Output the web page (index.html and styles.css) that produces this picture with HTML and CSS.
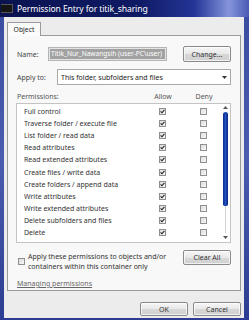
FILE: index.html
```html
<!DOCTYPE html>
<html>
<head>
    <title>Permission Entry for titik_sharing</title>
    <meta name="viewport" content="width=device-width, initial-scale=1.0">
    <link rel="stylesheet" href="styles.css">
</head>
<body>
    <div class="window">
        <div class="titlebar">
            <span class="app-icon"></span>
            <span class="title">Permission Entry for titik_sharing</span>
        </div>

        <div class="dialog">
            <div class="tabs">
                <div class="tab">Object</div>
            </div>

            <div class="panel">
                <div class="form-row">
                    <span class="label name-label">Name:</span>
                    <div class="textbox"><span class="selected">Titik_Nur_Nawangsih (user-PC\user)</span></div>
                    <button class="btn change-btn">Change...</button>
                </div>

                <div class="form-row apply-row">
                    <span class="label apply-label">Apply to:</span>
                    <div class="combo">
                        <span>This folder, subfolders and files</span>
                        <svg class="combo-arrow" width="5" height="3" viewBox="0 0 5 3"><path d="M0 0h5L2.5 3z" fill="#333"/></svg>
                    </div>
                </div>

                <div class="perm-head">
                    <span class="perm-title">Permissions:</span>
                    <span class="col">Allow</span>
                    <span class="col deny-col">Deny</span>
                </div>

                <div class="perm-list">
                    <div class="rows" id="rows">
                        <!-- rows inserted by script -->
                    </div>
                    <div class="scrollbar">
                        <svg class="arrow arrow-up" width="5" height="3" viewBox="0 0 5 3"><path d="M0 3h5L2.5 0z" fill="#555"/></svg>
                        <div class="track"><div class="thumb"></div></div>
                        <svg class="arrow" width="5" height="3" viewBox="0 0 5 3"><path d="M0 0h5L2.5 3z" fill="#555"/></svg>
                    </div>
                </div>

                <div class="apply-box">
                    <span class="chk"></span>
                    <span class="apply-text">Apply these permissions to objects and/or<br>containers within this container only</span>
                    <button class="btn clear-btn">Clear All</button>
                </div>

                <a href="#" class="manage-link">Managing permissions</a>
            </div>

            <div class="footer">
                <button class="btn ok-btn">OK</button>
                <button class="btn cancel-btn">Cancel</button>
            </div>
        </div>
    </div>

    <script>
        // Permission rows (last one is scrolled half out of view)
        const perms = [
            'Full control',
            'Traverse folder / execute file',
            'List folder / read data',
            'Read attributes',
            'Read extended attributes',
            'Create files / write data',
            'Create folders / append data',
            'Write attributes',
            'Write extended attributes',
            'Delete subfolders and files',
            'Delete',
            ''
        ];

        const check = '<svg width="5" height="5" viewBox="0 0 5 5"><path d="M0.6 2.4L2 3.8L4.4 0.9" fill="none" stroke="#222" stroke-width="1.1"/></svg>';

        const rows = document.getElementById('rows');
        perms.forEach(name => {
            const row = document.createElement('div');
            row.className = 'perm-row';
            row.innerHTML = `
                <span class="perm-name">${name}</span>
                <span class="cell"><span class="chk checked">${name ? check : ''}</span></span>
                <span class="cell deny-cell"><span class="chk"></span></span>
            `;
            rows.appendChild(row);
        });
    </script>
</body>
</html>
```

FILE: styles.css
```css
body {
    margin: 0;
    padding: 0;
    font-family: "Noto Sans", "Open Sans", sans-serif;
    font-size: 7px;
    color: #333;
    background-color: #2a3a8e;
}
.window {
    width: 249px;
    height: 320px;
    overflow: hidden;
    background: linear-gradient(to bottom, #3a4ca0, #4a5cb0 50%, #2c3c92);
}
.titlebar {
    height: 17px;
    display: flex;
    align-items: center;
    background: linear-gradient(to right, #0a1350 0%, #0f1a64 55%, #243496 78%, #8494dc 92%, #4a5ab4 100%);
}
.app-icon {
    width: 11px;
    height: 7px;
    margin-left: 1px;
    background-color: #151515;
    border: 1px solid #555;
    border-left: none;
}
.title {
    margin-left: 4px;
    color: #fff;
    font-size: 8.6px;
    letter-spacing: -0.1px;
}
.dialog {
    margin: 0 5px 0 4px;
    height: 301px;
    padding: 3px 3px 0 3px;
    box-sizing: border-box;
    background-color: #ececec;
}
.tabs {
    display: flex;
    height: 15px;
}
.tab {
    width: 34px;
    height: 14px;
    margin-top: 1px;
    border: 1px solid #9a9a9a;
    border-bottom: none;
    background-color: #fbfbfb;
    box-sizing: border-box;
    display: flex;
    align-items: center;
    justify-content: center;
    font-size: 6.8px;
    color: #222;
    position: relative;
    top: 1px;
}
.panel {
    height: 256px;
    border: 1px solid #9a9a9a;
    background-color: #f8f8f8;
    box-sizing: border-box;
    padding: 10px 9px 0 9px;
}
.form-row {
    display: flex;
    align-items: center;
    height: 16px;
}
.label {
    color: #444;
}
.name-label {
    width: 31px;
}
.textbox {
    width: 119px;
    height: 14px;
    box-sizing: border-box;
    border: 1px solid #b4b4b4;
    background-color: #e4e4e4;
    padding: 1px;
    display: flex;
}
.selected {
    flex: 1;
    background-color: #a2a2a2;
    color: #fff;
    font-size: 6.6px;
    line-height: 10px;
    padding-left: 1px;
    white-space: nowrap;
    overflow: hidden;
}
.btn {
    font-family: inherit;
    font-size: 7px;
    color: #333;
    height: 16px;
    padding: 0;
    border: 1px solid #8a8a8a;
    border-radius: 2px;
    background: linear-gradient(to bottom, #f6f6f6, #e8e8e8 50%, #d8d8d8 51%, #d0d0d0);
    box-shadow: inset 0 0 0 1px rgba(255, 255, 255, 0.7);
}
.change-btn {
    width: 48px;
    margin-left: auto;
}
.apply-row {
    margin-top: 7px;
}
.apply-label {
    width: 40px;
}
.combo {
    flex: 1;
    height: 16px;
    box-sizing: border-box;
    border: 1px solid #a8a8a8;
    background-color: #fff;
    display: flex;
    align-items: center;
    padding: 0 3px 0 3px;
    color: #222;
}
.combo-arrow {
    margin-left: auto;
}
.perm-head {
    display: flex;
    align-items: center;
    margin-top: 7px;
    height: 9px;
    color: #555;
}
.perm-title {
    flex: 1;
}
.col {
    width: 20px;
    display: flex;
    justify-content: center;
    white-space: nowrap;
}
.deny-col {
    margin-left: 21px;
    margin-right: 17px;
}
.perm-list {
    margin: 2px 0 0 -1px;
    height: 140px;
    box-sizing: border-box;
    border: 1px solid #c4c4c4;
    background-color: #fff;
    display: flex;
    overflow: hidden;
}
.rows {
    flex: 1;
    padding-top: 1px;
}
.perm-row {
    display: flex;
    align-items: center;
    height: 12.2px;
    padding-left: 7px;
    color: #333;
}
.perm-name {
    flex: 1;
    white-space: nowrap;
}
.cell {
    width: 20px;
    display: flex;
    justify-content: center;
}
.deny-cell {
    margin-left: 21px;
    margin-right: 8px;
}
.chk {
    width: 7px;
    height: 7px;
    box-sizing: border-box;
    border: 1px solid #8e8f8f;
    background: linear-gradient(to bottom right, #dcdcdc, #f8f8f8);
    display: flex;
    align-items: center;
    justify-content: center;
}
.chk svg {
    display: block;
}
.scrollbar {
    width: 9px;
    display: flex;
    flex-direction: column;
    align-items: center;
    padding: 2px 0 3px 0;
    box-sizing: border-box;
}
.track {
    flex: 1;
    width: 5px;
    margin: 3px 0;
    background: linear-gradient(to right, transparent 2px, #d0d0d0 2px, #d0d0d0 3px, transparent 3px);
}
.thumb {
    height: 94px;
    border-radius: 3px 3px 2px 2px;
    background: linear-gradient(to right, #0c2a8a, #2050c0 50%, #0a2478);
}
.apply-box {
    display: flex;
    align-items: flex-start;
    margin-top: 7px;
}
.apply-box .chk {
    margin-top: 8px;
    margin-left: 1px;
}
.apply-text {
    margin-left: 3px;
    margin-top: 2px;
    line-height: 9.5px;
    color: #333;
}
.clear-btn {
    width: 48px;
    height: 15px;
    margin-left: auto;
}
.manage-link {
    display: inline-block;
    margin-top: 8px;
    color: #666;
    text-decoration: underline;
}
.footer {
    display: flex;
    justify-content: flex-end;
    gap: 5px;
    margin-top: 11px;
}
.ok-btn,
.cancel-btn {
    width: 48px;
    height: 14px;
}
```
